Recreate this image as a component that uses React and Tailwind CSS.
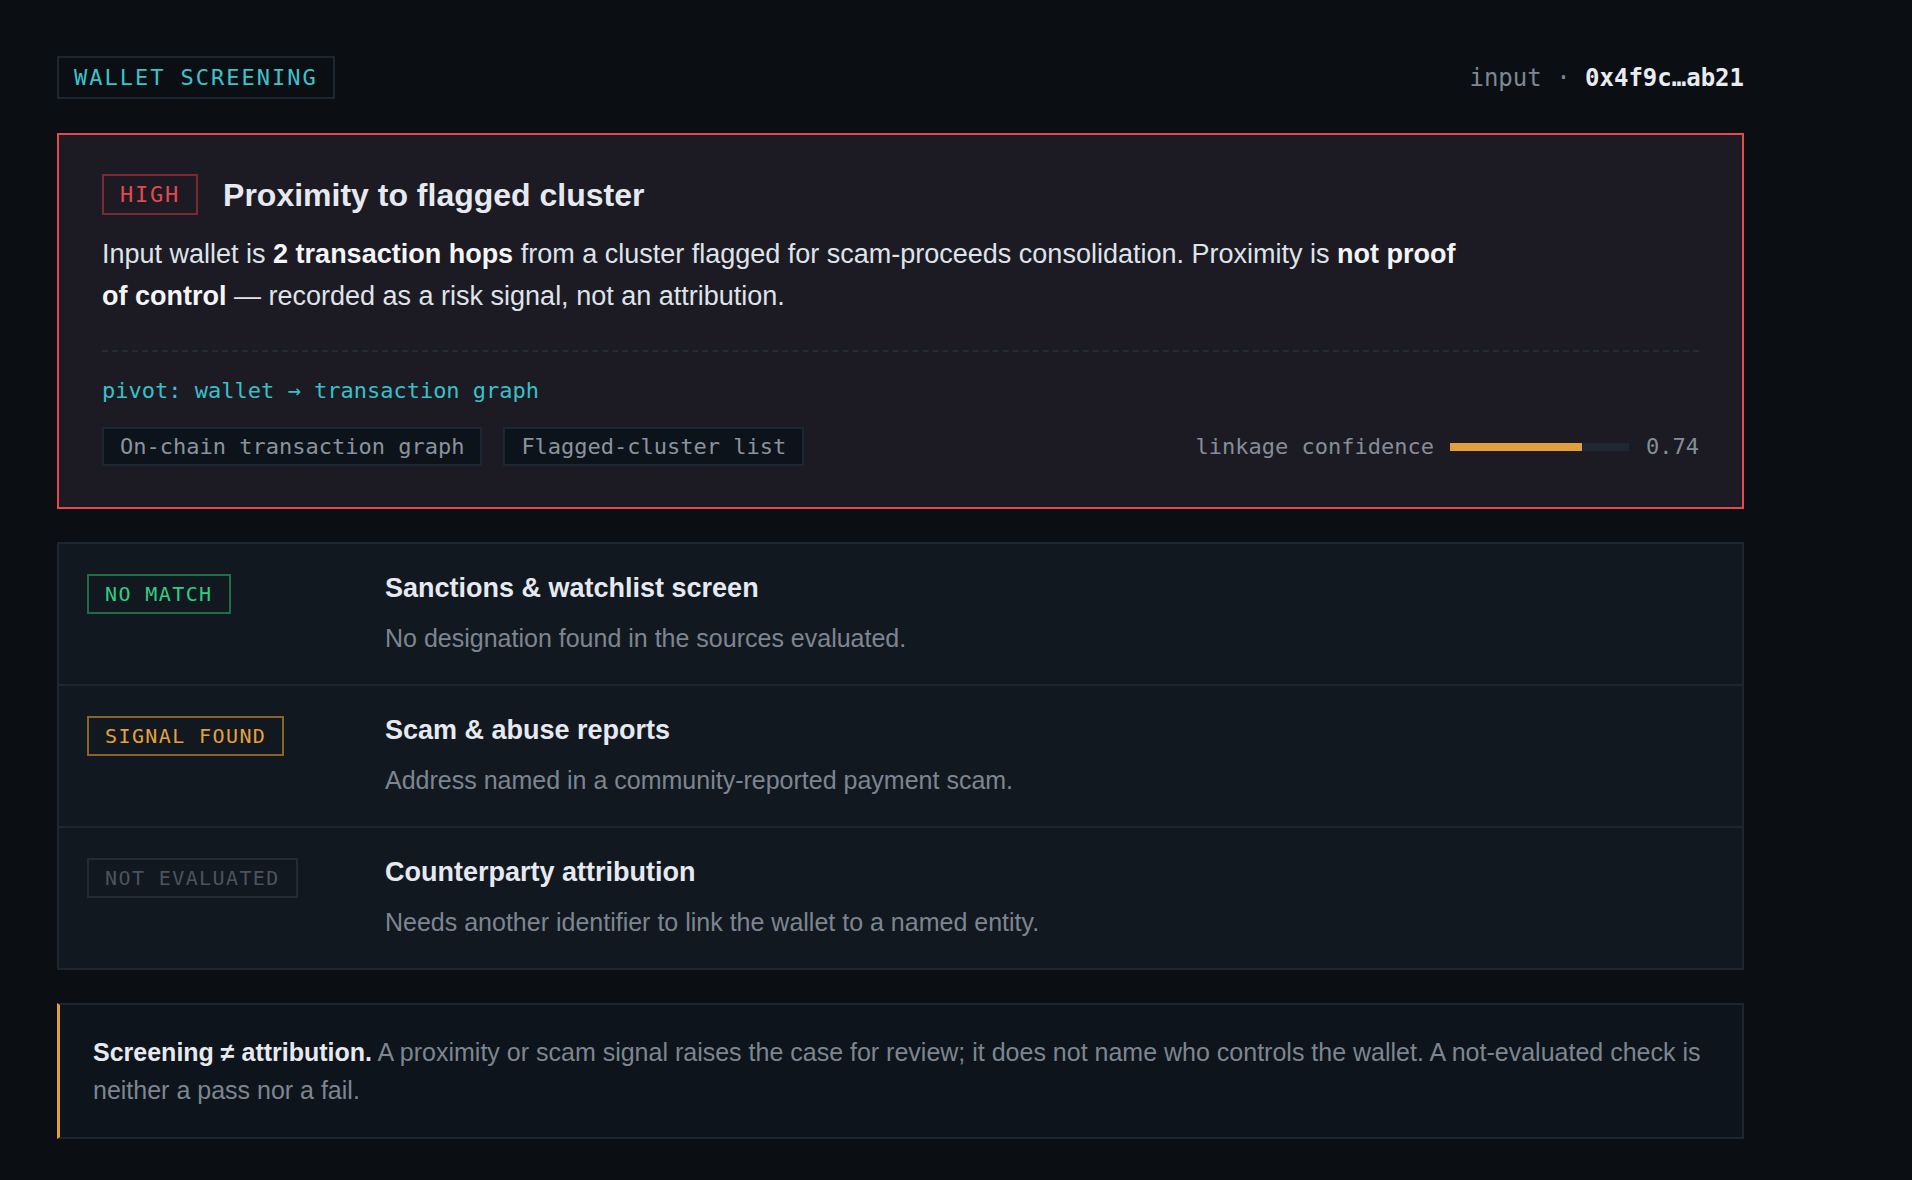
import React from "react";

const mono = { fontFamily: '"DejaVu Sans Mono", "Liberation Mono", monospace' };

const checks = [
  {
    status: "NO MATCH",
    tone: "border-[#1f6b4a] text-[#2fcf80]",
    title: "Sanctions & watchlist screen",
    desc: "No designation found in the sources evaluated.",
  },
  {
    status: "SIGNAL FOUND",
    tone: "border-[#8a6424] text-[#e3a23d]",
    title: "Scam & abuse reports",
    desc: "Address named in a community-reported payment scam.",
  },
  {
    status: "NOT EVALUATED",
    tone: "border-[#222c37] text-[#4b545e]",
    title: "Counterparty attribution",
    desc: "Needs another identifier to link the wallet to a named entity.",
  },
];

function CheckRow({ item, last }) {
  return (
    <div className={"grid grid-cols-[298px_1fr] pl-[28px] pr-[28px] pt-[26px] pb-[28px] " + (last ? "" : "border-b-2 border-[#1e2731]")}>
      <div className="pt-[4px]">
        <span
          style={mono}
          className={"inline-block border-2 px-[16px] py-[6px] text-[20px] leading-[24px] tracking-[0.07em] " + item.tone}
        >
          {item.status}
        </span>
      </div>
      <div>
        <div className="text-[27px] leading-[36px] font-bold text-[#e6eaf0]">{item.title}</div>
        <div className="mt-[14px] text-[25px] leading-[36px] text-[#7d8690]">{item.desc}</div>
      </div>
    </div>
  );
}

export default function App() {
  const confidence = 0.74;
  return (
    <div
      className="min-h-screen bg-[#0b0f14] px-[57px] pt-[56px] pb-[40px]"
      style={{ fontFamily: '"Liberation Sans", Arial, sans-serif' }}
    >
      <div className="w-[1687px]">
        {/* header */}
        <div className="flex items-center justify-between">
          <span
            style={mono}
            className="border-2 border-[#1c2630] px-[15px] py-[7px] text-[22px] leading-[25px] tracking-[0.09em] text-[#3cc3cb]"
          >
            WALLET SCREENING
          </span>
          <div style={mono} className="text-[24px] leading-[30px] text-[#7e8791]">
            input · <span className="font-bold text-[#e8ecf1]">0x4f9c…ab21</span>
          </div>
        </div>

        {/* main finding */}
        <div className="mt-[34px] border-2 border-[#e5484d] bg-[#1c1b23] px-[43px] pt-[39px] pb-[41px]">
          <div className="flex items-center gap-[25px]">
            <span
              style={mono}
              className="border-2 border-[#7a2a33] px-[16px] py-[6px] text-[22px] leading-[25px] tracking-[0.08em] text-[#e5484d]"
            >
              HIGH
            </span>
            <h1 className="text-[32px] leading-[40px] font-bold text-[#e6eaf0]">Proximity to flagged cluster</h1>
          </div>
          <p className="mt-[18px] max-w-[1375px] text-[27px] leading-[42px] text-[#dfe3e9]">
            Input wallet is <b className="text-[#f3f5f8]">2 transaction hops</b> from a cluster flagged for
            scam-proceeds consolidation. Proximity is <b className="text-[#f3f5f8]">not proof of control</b> —
            recorded as a risk signal, not an attribution.
          </p>
          <div className="mt-[33px] border-t-2 border-dashed border-[#232b35]" />
          <div style={mono} className="mt-[24px] text-[22px] leading-[30px] text-[#38c0c9]">
            pivot: wallet → transaction graph
          </div>
          <div className="mt-[21px] flex items-center justify-between">
            <div className="flex gap-[21px]">
              {["On-chain transaction graph", "Flagged-cluster list"].map((s) => (
                <span
                  key={s}
                  style={mono}
                  className="border-2 border-[#1d2733] bg-[#0d131a] px-[16px] py-[5px] text-[22px] leading-[25px] text-[#8a939d]"
                >
                  {s}
                </span>
              ))}
            </div>
            <div style={mono} className="flex items-center text-[22px] leading-[30px] text-[#858e98]">
              <span>linkage confidence</span>
              <div className="ml-[16px] h-[8px] w-[179px] bg-[#1f2832]">
                <div className="h-full bg-[#e2a03b]" style={{ width: `${confidence * 100}%` }} />
              </div>
              <span className="ml-[17px]">{confidence.toFixed(2)}</span>
            </div>
          </div>
        </div>

        {/* checks */}
        <div className="mt-[33px] border-2 border-[#1e2731] bg-[#121820]">
          {checks.map((c, i) => (
            <CheckRow key={c.status} item={c} last={i === checks.length - 1} />
          ))}
        </div>

        {/* note */}
        <div className="mt-[33px] border-2 border-l-[3px] border-[#1e2731] border-l-[#e2a03b] bg-[#0e141b] pl-[33px] pr-[33px] pt-[28px] pb-[28px]">
          <p className="text-[25px] leading-[38px] text-[#7d8690]">
            <b className="text-[#e6eaf0]">Screening ≠ attribution.</b> A proximity or scam signal raises the case for
            review; it does not name who controls the wallet. A not-evaluated check is neither a pass nor a fail.
          </p>
        </div>
      </div>
    </div>
  );
}
